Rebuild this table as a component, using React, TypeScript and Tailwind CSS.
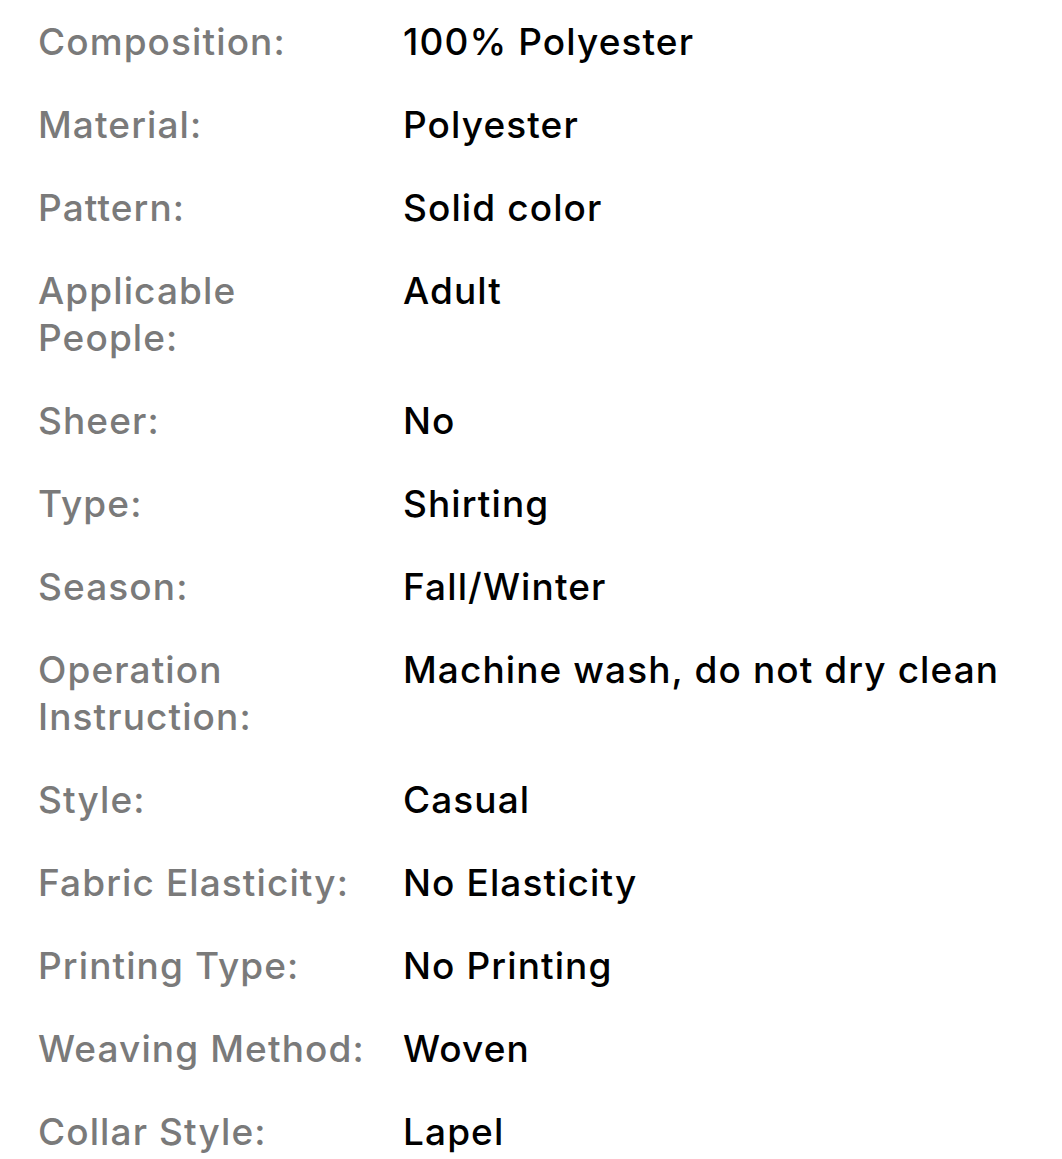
const specs: [string, string][] = [
  ["Composition:", "100% Polyester"],
  ["Material:", "Polyester"],
  ["Pattern:", "Solid color"],
  ["Applicable People:", "Adult"],
  ["Sheer:", "No"],
  ["Type:", "Shirting"],
  ["Season:", "Fall/Winter"],
  ["Operation Instruction:", "Machine wash, do not dry clean"],
  ["Style:", "Casual"],
  ["Fabric Elasticity:", "No Elasticity"],
  ["Printing Type:", "No Printing"],
  ["Weaving Method:", "Woven"],
  ["Collar Style:", "Lapel"],
]

export default function App() {
  return (
    <div className="min-h-screen bg-white pl-[38px] pt-[18px] font-['Inter',sans-serif] text-[37px] leading-[47px] font-medium tracking-[1.1px]">
      <dl className="flex flex-col gap-[36px]">
        {specs.map(([label, value]) => (
          <div key={label} className="flex">
            <dt className="w-[365px] shrink-0 pr-[28px] text-[#7a7a7a]">{label}</dt>
            <dd className="text-black">{value}</dd>
          </div>
        ))}
      </dl>
    </div>
  )
}
